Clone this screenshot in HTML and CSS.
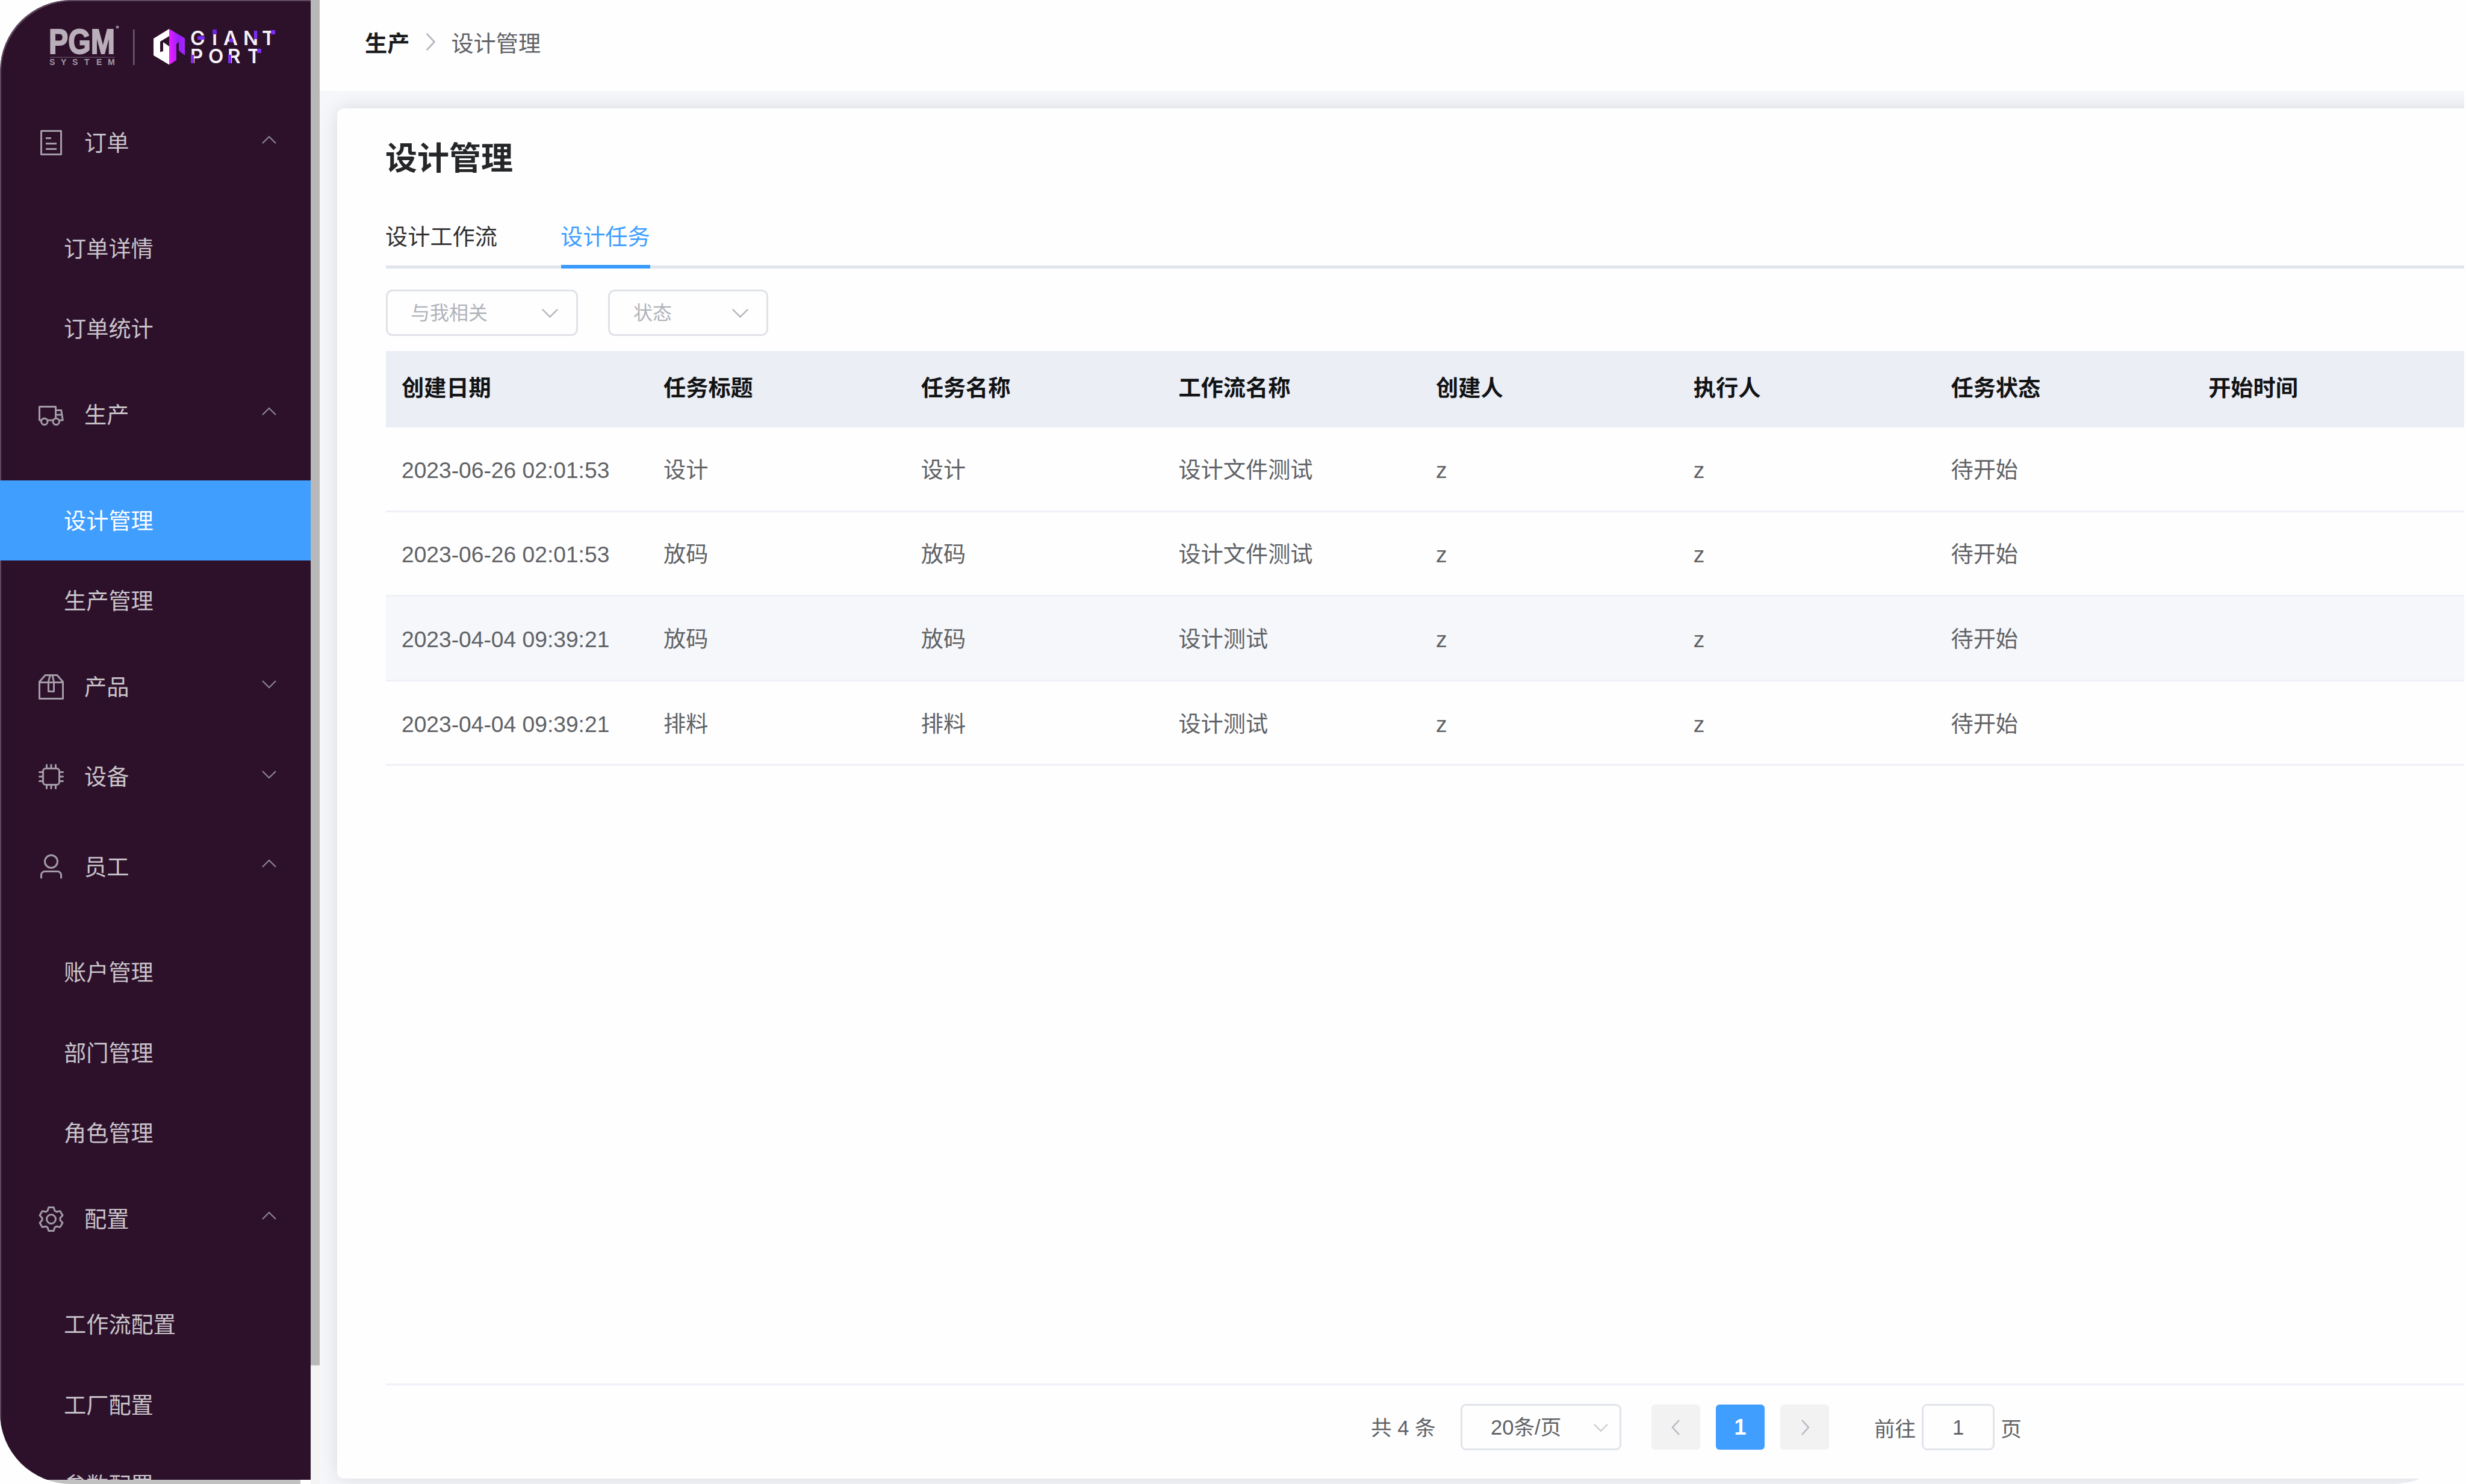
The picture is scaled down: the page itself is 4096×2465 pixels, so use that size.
FILE: index.html
```html
<!DOCTYPE html>
<html lang="zh-CN">
<head>
    <meta charset="UTF-8">
    <title>设计管理</title>
    <link rel="stylesheet" href="styles.css">
</head>
<body>
    <!-- Shared icons -->
    <svg class="icon-defs" width="0" height="0">
        <symbol id="arrow-down" viewBox="0 0 1024 1024">
            <path d="M160 352l352 352 352-352" fill="none" stroke="currentColor" stroke-width="66"/>
        </symbol>
        <symbol id="arrow-up" viewBox="0 0 1024 1024">
            <path d="M160 672l352-352 352 352" fill="none" stroke="currentColor" stroke-width="66"/>
        </symbol>
        <symbol id="arrow-right" viewBox="0 0 1024 1024">
            <path d="M352 128l352 384-352 384" fill="none" stroke="currentColor" stroke-width="78"/>
        </symbol>
        <symbol id="arrow-left" viewBox="0 0 1024 1024">
            <path d="M672 128L320 512l352 384" fill="none" stroke="currentColor" stroke-width="78"/>
        </symbol>
    </svg>

    <div class="app">
        <!-- Sidebar -->
        <aside class="sidebar">
            <div class="sidebar-inner">
                <div class="logo">
                    <svg class="logo-svg" viewBox="0 0 516 161">
                        <defs>
                            <linearGradient id="hexGradient" x1="0" y1="0.6" x2="1" y2="0.4">
                                <stop offset="0" stop-color="#ee1cff"/>
                                <stop offset="0.6" stop-color="#9a20ff"/>
                                <stop offset="1" stop-color="#a822ff"/>
                            </linearGradient>
                        </defs>
                        <text class="logo-pgm" x="81" y="89" textLength="110" lengthAdjust="spacingAndGlyphs">PGM</text>
                        <circle cx="195" cy="45" r="2.5" fill="#8f8390"/>
                        <rect x="83" y="94.500" width="108" height="1.5" fill="#5d465c"/>
                        <text class="logo-system" x="82 101 120 140 160 179" y="108">SYSTEM</text>
                        <rect x="221" y="49" width="2.5" height="59" fill="#6d5a6e"/>
                        <path d="M281 48L255 64v28l26 15.500V77l-10-7v15l-5 1.500V69l15-9z" fill="#fff"/>
                        <path d="M281 48L307 63.500V92l-10-8V70l-4 3v27l-12 7.500z" fill="url(#hexGradient)"/>
                        <text class="logo-giant" x="316 352 371 404 435" y="75">GIANT</text>
                        <text class="logo-giant" x="316 346 378 411" y="105">PORT</text>
                        <rect x="328" y="60" width="12" height="6" rx="2" fill="#7a2cf5"/>
                        <rect x="353" y="49" width="7" height="8" fill="#6a26dd"/>
                        <circle cx="384" cy="67" r="3.500" fill="#7a2cf5"/>
                        <rect x="422" y="51" width="5" height="14" fill="#7a2cf5"/>
                        <rect x="450" y="50" width="7" height="7" fill="#7a2cf5"/>
                        <rect x="317" y="91" width="5" height="14" fill="#7a2cf5"/>
                        <rect x="379" y="91" width="5" height="14" fill="#7a2cf5"/>
                        <rect x="427" y="81" width="7" height="7" fill="#7a2cf5"/>
                    </svg>
                </div>

                <nav class="menu">
                    <div class="menu-title">
                        <svg class="menu-icon" viewBox="0 0 1024 1024"><path d="M192 128v768h640V128H192zm-32-64h704a32 32 0 0 1 32 32v832a32 32 0 0 1-32 32H160a32 32 0 0 1-32-32V96a32 32 0 0 1 32-32zm160 448h384v64H320v-64zm0-192h192v64H320v-64zm0 384h384v64H320v-64z"/></svg>
                        <span>订单</span>
                        <svg class="menu-arrow"><use href="#arrow-up"/></svg>
                    </div>
                    <div class="submenu">
                        <a class="menu-item">订单详情</a>
                        <a class="menu-item">订单统计</a>
                    </div>

                    <div class="menu-title">
                        <svg class="menu-icon" viewBox="0 0 1024 1024"><path d="M128.896 736H96a32 32 0 0 1-32-32V224a32 32 0 0 1 32-32h576a32 32 0 0 1 32 32v96h164.544a32 32 0 0 1 31.616 27.136l54.144 352A32 32 0 0 1 922.688 736h-91.520a144 144 0 1 1-286.272 0H415.104a144 144 0 1 1-286.272 0zm23.360-64a143.872 143.872 0 0 1 239.488 0H568.320c17.088-25.600 42.240-45.376 71.744-55.808V256H128v416h24.256zm655.488 0h77.632l-19.648-128H704v64.896A144 144 0 0 1 807.744 672zm48.128-192-14.720-96H704v96h151.872zM688 832a80 80 0 1 0 0-160 80 80 0 0 0 0 160zm-416 0a80 80 0 1 0 0-160 80 80 0 0 0 0 160z"/></svg>
                        <span>生产</span>
                        <svg class="menu-arrow"><use href="#arrow-up"/></svg>
                    </div>
                    <div class="submenu">
                        <a class="menu-item active">设计管理</a>
                        <a class="menu-item">生产管理</a>
                    </div>

                    <div class="menu-title">
                        <svg class="menu-icon" viewBox="0 0 1024 1024"><path d="M317.056 128 128 344.064V896h768V344.064L706.944 128H317.056zm-14.528-64h418.944a32 32 0 0 1 24.064 10.880l206.528 236.096A32 32 0 0 1 960 332.032V928a32 32 0 0 1-32 32H96a32 32 0 0 1-32-32V332.032a32 32 0 0 1 7.936-21.120L278.400 75.008A32 32 0 0 1 302.528 64z"/><path d="M64 320h896v64H64z"/><path d="M448 327.872V640h128V327.872L526.080 128h-28.160L448 327.872zM448 64h128l64 256v352a32 32 0 0 1-32 32H416a32 32 0 0 1-32-32V320l64-256z"/></svg>
                        <span>产品</span>
                        <svg class="menu-arrow"><use href="#arrow-down"/></svg>
                    </div>

                    <div class="menu-title">
                        <svg class="menu-icon" viewBox="0 0 1024 1024"><rect x="224" y="224" width="576" height="576" rx="96" fill="none" stroke="currentColor" stroke-width="64"/><path d="M512 96v128M352 96v128M672 96v128M512 800v128M352 800v128M672 800v128M96 512h128M96 352h128M96 672h128M800 512h128M800 352h128M800 672h128" fill="none" stroke="currentColor" stroke-width="64" stroke-linecap="round"/></svg>
                        <span>设备</span>
                        <svg class="menu-arrow"><use href="#arrow-down"/></svg>
                    </div>

                    <div class="menu-title">
                        <svg class="menu-icon" viewBox="0 0 1024 1024"><path d="M512 512a192 192 0 1 0 0-384 192 192 0 0 0 0 384zm0 64a256 256 0 1 1 0-512 256 256 0 0 1 0 512zm320 320v-96a96 96 0 0 0-96-96H288a96 96 0 0 0-96 96v96a32 32 0 1 1-64 0v-96a160 160 0 0 1 160-160h448a160 160 0 0 1 160 160v96a32 32 0 1 1-64 0z"/></svg>
                        <span>员工</span>
                        <svg class="menu-arrow"><use href="#arrow-up"/></svg>
                    </div>
                    <div class="submenu">
                        <a class="menu-item">账户管理</a>
                        <a class="menu-item">部门管理</a>
                        <a class="menu-item">角色管理</a>
                    </div>

                    <div class="menu-title">
                        <svg class="menu-icon" viewBox="0 0 1024 1024"><path d="M600.704 64a32 32 0 0 1 30.464 22.208l35.200 109.376c14.784 7.232 28.928 15.360 42.432 24.512l112.384-24.192a32 32 0 0 1 34.432 15.360L944.320 364.800a32 32 0 0 1-4.032 37.504l-77.120 85.120a357.120 357.120 0 0 1 0 49.024l77.120 85.248a32 32 0 0 1 4.032 37.504l-88.704 153.600a32 32 0 0 1-34.432 15.296L708.800 803.904c-13.440 9.088-27.648 17.280-42.368 24.512l-35.264 109.376A32 32 0 0 1 600.704 960H423.296a32 32 0 0 1-30.464-22.208L357.696 828.480a351.616 351.616 0 0 1-42.560-24.640l-112.320 24.256a32 32 0 0 1-34.432-15.360L79.680 659.200a32 32 0 0 1 4.032-37.504l77.120-85.248a357.120 357.120 0 0 1 0-48.896l-77.120-85.248A32 32 0 0 1 79.680 364.800l88.704-153.600a32 32 0 0 1 34.432-15.296l112.320 24.256c13.568-9.152 27.776-17.408 42.560-24.640l35.200-109.312A32 32 0 0 1 423.232 64H600.640zm-23.424 64H446.720l-36.352 113.088-24.512 11.968a294.113 294.113 0 0 0-34.816 20.096l-22.656 15.360-116.224-25.088-65.280 113.152 79.680 88.192-1.920 27.136a293.120 293.120 0 0 0 0 40.192l1.920 27.136-79.808 88.192 65.344 113.152 116.224-25.024 22.656 15.296a294.113 294.113 0 0 0 34.816 20.096l24.512 11.968L446.720 896h130.688l36.480-113.152 24.448-11.904a288.282 288.282 0 0 0 34.752-20.096l22.592-15.296 116.288 25.024 65.280-113.152-79.744-88.192 1.920-27.136a293.120 293.120 0 0 0 0-40.256l-1.920-27.136 79.808-88.128-65.344-113.152-116.288 24.960-22.592-15.232a287.616 287.616 0 0 0-34.752-20.096l-24.448-11.904L577.344 128zM512 320a192 192 0 1 1 0 384 192 192 0 0 1 0-384zm0 64a128 128 0 1 0 0 256 128 128 0 0 0 0-256z"/></svg>
                        <span>配置</span>
                        <svg class="menu-arrow"><use href="#arrow-up"/></svg>
                    </div>
                    <div class="submenu">
                        <a class="menu-item">工作流配置</a>
                        <a class="menu-item">工厂配置</a>
                        <a class="menu-item">参数配置</a>
                    </div>
                </nav>
            </div>
            <div class="scroll-x"><div class="scroll-x-thumb"></div></div>
        </aside>
        <div class="scroll-y"><div class="scroll-y-thumb"></div></div>

        <!-- Page -->
        <div class="page">
            <header class="header">
                <span class="crumb-root">生产</span>
                <svg class="crumb-arrow"><use href="#arrow-right"/></svg>
                <span class="crumb">设计管理</span>
            </header>

            <main class="main">
                <div class="card">
                    <h1 class="card-title">设计管理</h1>

                    <div class="tabs">
                        <div class="tab">设计工作流</div>
                        <div class="tab active">设计任务</div>
                    </div>

                    <div class="filters">
                        <div class="select select-related">
                            <span>与我相关</span>
                            <svg class="select-arrow"><use href="#arrow-down"/></svg>
                        </div>
                        <div class="select select-status">
                            <span>状态</span>
                            <svg class="select-arrow"><use href="#arrow-down"/></svg>
                        </div>
                    </div>

                    <div class="table-wrap">
                        <table class="table">
                            <thead>
                                <tr>
                                    <th class="col-date">创建日期</th>
                                    <th>任务标题</th>
                                    <th>任务名称</th>
                                    <th>工作流名称</th>
                                    <th>创建人</th>
                                    <th>执行人</th>
                                    <th>任务状态</th>
                                    <th class="col-last">开始时间</th>
                                </tr>
                            </thead>
                            <tbody>
                                <tr>
                                    <td>2023-06-26 02:01:53</td>
                                    <td>设计</td>
                                    <td>设计</td>
                                    <td>设计文件测试</td>
                                    <td>z</td>
                                    <td>z</td>
                                    <td>待开始</td>
                                    <td></td>
                                </tr>
                                <tr>
                                    <td>2023-06-26 02:01:53</td>
                                    <td>放码</td>
                                    <td>放码</td>
                                    <td>设计文件测试</td>
                                    <td>z</td>
                                    <td>z</td>
                                    <td>待开始</td>
                                    <td></td>
                                </tr>
                                <tr class="hover">
                                    <td>2023-04-04 09:39:21</td>
                                    <td>放码</td>
                                    <td>放码</td>
                                    <td>设计测试</td>
                                    <td>z</td>
                                    <td>z</td>
                                    <td>待开始</td>
                                    <td></td>
                                </tr>
                                <tr>
                                    <td>2023-04-04 09:39:21</td>
                                    <td>排料</td>
                                    <td>排料</td>
                                    <td>设计测试</td>
                                    <td>z</td>
                                    <td>z</td>
                                    <td>待开始</td>
                                    <td></td>
                                </tr>
                            </tbody>
                        </table>
                    </div>

                    <!-- Pagination -->
                    <div class="pagination">
                        <span class="total">共 4 条</span>
                        <div class="page-size">
                            <span>20条/页</span>
                            <svg class="size-arrow"><use href="#arrow-down"/></svg>
                        </div>
                        <div class="pager">
                            <button class="pager-btn"><svg><use href="#arrow-left"/></svg></button>
                            <button class="pager-btn current">1</button>
                            <button class="pager-btn"><svg><use href="#arrow-right"/></svg></button>
                        </div>
                        <div class="jumper">
                            <span>前往</span>
                            <div class="jumper-input">1</div>
                            <span>页</span>
                        </div>
                    </div>
                </div>
            </main>
        </div>
    </div>
</body>
</html>
```
FILE: styles.css
```css
* {
    box-sizing: border-box;
}

body {
    margin: 0;
    width: 4096px;
    height: 2465px;
    overflow: hidden;
    background-color: #fefefe;
    font-family: "Liberation Sans", "Noto Sans CJK SC", sans-serif;
    font-size: 37.2px;
    color: #606266;
}

.icon-defs {
    position: absolute;
}

/* Rounded window */
.app {
    display: flex;
    width: 4093px;
    height: 2465px;
    border-radius: 118px;
    overflow: hidden;
}

/* Sidebar */
.sidebar {
    flex: none;
    width: 516px;
    height: 2465px;
}

.sidebar-inner {
    height: 2458px;
    overflow: hidden;
    background-color: #2d112b;
    border-top-left-radius: 118px;
    box-shadow: inset 2px 2px 0 #5f485e;
}

.logo {
    height: 161px;
}

.logo-svg {
    display: block;
    width: 516px;
    height: 161px;
}

.logo-pgm {
    font-family: "Liberation Sans", sans-serif;
    font-size: 58px;
    font-weight: bold;
    fill: #b9aeb9;
    stroke: #b9aeb9;
    stroke-width: 2px;
}

.logo-system {
    font-family: "Liberation Sans", sans-serif;
    font-size: 14px;
    font-weight: bold;
    fill: #a498a4;
}

.logo-giant {
    font-family: Inter, sans-serif;
    font-size: 33px;
    font-weight: 600;
    fill: #f6f0f8;
}

.menu-title {
    display: flex;
    align-items: center;
    height: 149.4px;
    padding: 3px 53px 0 61px;
    color: #c9c4ca;
}

.menu-title span {
    margin-top: -4px;
}

.menu-icon {
    width: 48px;
    height: 48px;
    margin-right: 31px;
    color: #a39ca6;
    fill: currentColor;
}

.menu-arrow {
    width: 32px;
    height: 32px;
    margin-left: auto;
    margin-bottom: 9px;
    color: #8f8792;
}

.submenu {
    padding-top: 35.6px;
}

.menu-item {
    display: block;
    height: 133.4px;
    line-height: 137px;
    padding-left: 106px;
    color: #c9c4ca;
}

.menu-item.active {
    background-color: #409eff;
    color: #ffffff;
}

/* Scrollbars */
.scroll-x {
    height: 7px;
    padding-left: 80px;
    background-color: #fefefe;
}

.scroll-x-thumb {
    width: 419px;
    height: 7px;
    background-color: #c1c1c1;
}

.scroll-y {
    flex: none;
    width: 15px;
    background-color: #f3f3f3;
}

.scroll-y-thumb {
    height: 2268px;
    background-color: #b8b8b8;
}

/* Page */
.page {
    display: flex;
    flex-direction: column;
    flex: 1;
    min-width: 0;
    background-color: #f5f7fa;
}

.header {
    display: flex;
    align-items: center;
    flex: none;
    height: 151px;
    padding: 0 0 12px 75px;
    background-color: #fefefe;
    z-index: 1;
}

.crumb-root {
    color: #1a1b1d;
    font-weight: bold;
}

.crumb-arrow {
    width: 37px;
    height: 37px;
    margin: 0 16px;
    color: #b4b8c0;
}

.main {
    flex: 1;
    padding: 29px 0 9px 29px;
}

.card {
    display: flex;
    flex-direction: column;
    width: 3700px;
    height: 2276px;
    padding-left: 81px;
    background-color: #fefefe;
    border-radius: 11px;
    box-shadow: 0 0 32px rgba(0, 0, 0, 0.12);
}

.card-title {
    height: 80px;
    margin: 44px 0 0 -1px;
    line-height: 80px;
    font-size: 53px;
    font-weight: bold;
    color: #242628;
}

/* Tabs */
.tabs {
    display: flex;
    gap: 106px;
    height: 107px;
    margin-top: 35px;
    border-bottom: 5px solid #e0e4eb;
}

.tab {
    height: 107px;
    line-height: 111px;
    text-indent: -1px;
    color: #303133;
}

.tab.active {
    color: #409eff;
    border-bottom: 6px solid #389aff;
}

/* Filters */
.filters {
    display: flex;
    gap: 50px;
    margin-top: 35px;
}

.select {
    display: flex;
    align-items: center;
    justify-content: space-between;
    height: 77px;
    border: 3px solid #e0e2e9;
    border-radius: 11px;
    font-size: 32px;
    color: #b0b3bb;
}

.select span {
    margin-top: -5px;
}

.select-related {
    width: 319px;
    padding: 0 25px 0 38px;
}

.select-status {
    width: 266px;
    padding: 0 25px 0 39px;
}

.select-arrow {
    width: 37px;
    height: 37px;
}

/* Table */
.table-wrap {
    flex: none;
    height: 1718px;
    margin-top: 25px;
    border-bottom: 3px solid #f0f1f8;
}

.table {
    width: 3856px;
    border-collapse: separate;
    border-spacing: 0;
    table-layout: fixed;
}

.table th,
.table td {
    padding: 0 0 0 26px;
    text-align: left;
    line-height: 50px;
}

.table th {
    width: 427.7px;
    height: 127px;
    padding-bottom: 3px;
    background-color: #ebeef4;
    color: #121315;
}

.table .col-date {
    width: 435px;
}

.table .col-last {
    width: auto;
}

.table td {
    height: 140.6px;
    padding-top: 4px;
    border-bottom: 3px solid #eff1f7;
}

.table .hover td {
    background-color: #f5f7fa;
}

/* Pagination */
.pagination {
    display: flex;
    align-items: center;
    height: 77px;
    margin-top: 31px;
    padding-left: 1636px;
    font-size: 34.6px;
}

.total {
    width: 149px;
    margin-top: -4px;
}

.page-size {
    display: flex;
    align-items: center;
    justify-content: space-between;
    width: 267px;
    height: 77px;
    padding: 0 15px 0 47px;
    border: 3px solid #e2e4eb;
    border-radius: 9px;
}

.page-size span {
    margin-top: -6px;
}

.size-arrow {
    width: 32px;
    height: 32px;
    color: #c6c9d0;
}

.pager {
    display: flex;
    gap: 26px;
    margin-left: 50px;
}

.pager-btn {
    display: flex;
    align-items: center;
    justify-content: center;
    width: 81px;
    height: 75px;
    padding: 0;
    border: none;
    border-radius: 6px;
    background-color: #f2f2f3;
    color: #b4b8c0;
    font-family: inherit;
    font-size: 36px;
}

.pager-btn svg {
    width: 32px;
    height: 32px;
}

.pager-btn.current {
    background-color: #409eff;
    color: #ffffff;
    font-weight: bold;
}

.jumper {
    display: flex;
    align-items: center;
    gap: 10px;
    margin-left: 75px;
}

.jumper-input {
    width: 121px;
    height: 77px;
    line-height: 73px;
    text-align: center;
    border: 3px solid #e2e4eb;
    border-radius: 9px;
}
```
